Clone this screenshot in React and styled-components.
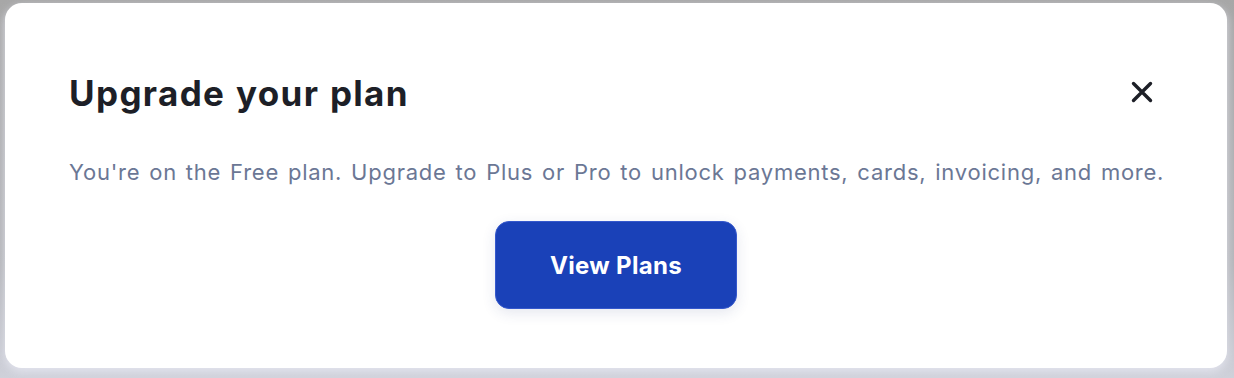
import React from "react";
import styled, { createGlobalStyle } from "styled-components";

const Global = createGlobalStyle`
  html, body { margin: 0; padding: 0; }
  body {
    width: 1234px;
    height: 378px;
    overflow: hidden;
    background: linear-gradient(180deg, #a7a7a7 0%, #b4b5b9 70%, #cfd1da 100%);
    font-family: Inter, "Noto Sans", sans-serif;
  }
`;

const Page = styled.div`
  padding: 3px 7px 10px 5px;
  box-sizing: border-box;
  width: 1234px;
  height: 378px;
`;

const Card = styled.div`
  box-sizing: border-box;
  height: 365px;
  background: #ffffff;
  border-radius: 17px;
  box-shadow: 0 4px 10px rgba(228, 230, 240, 0.9);
  padding: 68px 64px 0 64px;
  display: flex;
  flex-direction: column;
`;

const Header = styled.div`
  display: flex;
  align-items: flex-start;
  justify-content: space-between;
  padding-right: 9px;
`;

const Title = styled.h2`
  margin: 0;
  font-size: 35px;
  line-height: 44px;
  font-weight: 700;
  color: #1d1f27;
  letter-spacing: 1.35px;
  word-spacing: 1px;
`;

const CloseButton = styled.button`
  border: 0;
  background: transparent;
  padding: 0;
  margin-top: 9px;
  width: 24px;
  height: 24px;
  display: flex;
  align-items: center;
  justify-content: center;
  color: #1d1f27;
  cursor: pointer;
`;

const Text = styled.p`
  margin: 43px 0 0 0;
  font-size: 22px;
  line-height: 28px;
  color: #6b7795;
  font-weight: 400;
  letter-spacing: 0.75px;
  word-spacing: 2px;
  white-space: nowrap;
`;

const Actions = styled.div`
  display: flex;
  justify-content: center;
  margin-top: 35px;
`;

const PrimaryButton = styled.button`
  width: 242px;
  height: 88px;
  border-radius: 14px;
  border: 1.5px solid #3558cc;
  background: #1a41b8;
  color: #ffffff;
  font-family: Inter, "Noto Sans", sans-serif;
  font-size: 24px;
  font-weight: 700;
  letter-spacing: 0.3px;
  box-shadow: 0 4px 14px rgba(40, 60, 120, 0.12);
  cursor: pointer;
`;

export default function App() {
  return (
    <>
      <Global />
      <Page>
        <Card>
          <Header>
            <Title>Upgrade your plan</Title>
            <CloseButton aria-label="Close">
              <svg width="22" height="22" viewBox="0 0 22 22" fill="none">
                <path d="M2.5 2.5 L19.5 19.5 M19.5 2.5 L2.5 19.5" stroke="currentColor" strokeWidth="3.4" strokeLinecap="round" />
              </svg>
            </CloseButton>
          </Header>
          <Text>
            You're on the Free plan. Upgrade to Plus or Pro to unlock payments, cards, invoicing, and more.
          </Text>
          <Actions>
            <PrimaryButton>View Plans</PrimaryButton>
          </Actions>
        </Card>
      </Page>
    </>
  );
}
